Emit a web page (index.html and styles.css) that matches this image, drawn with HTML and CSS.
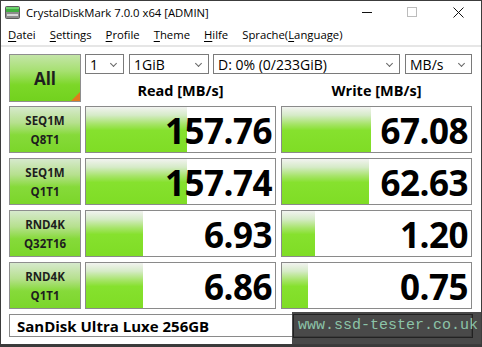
FILE: index.html
```html
<!DOCTYPE html>
<html>
<head>
<meta charset="utf-8">
<link rel="stylesheet" href="styles.css">
</head>
<body>
<div class="window">
  <div class="titlebar">
    <svg class="appicon" width="15" height="13" viewBox="0 0 15 13">
      <rect x="0.5" y="0.5" width="14" height="12" rx="1" fill="#8c8c8c" stroke="#5a5a5a"/>
      <rect x="1" y="1" width="13" height="5" fill="#3fae3f"/>
      <rect x="1" y="1" width="13" height="2" fill="#6fd36f"/>
      <rect x="2" y="8" width="11" height="2" fill="#d8d8d8"/>
    </svg>
    <span class="title">CrystalDiskMark 7.0.0 x64 [ADMIN]</span>
    <div class="controls">
      <span class="ctl min"></span>
      <span class="ctl max"></span>
      <svg class="ctl close" width="11" height="11" viewBox="0 0 11 11"><path d="M0.5 0.5 L10.5 10.5 M10.5 0.5 L0.5 10.5" stroke="#111" stroke-width="1"/></svg>
    </div>
  </div>
  <div class="menubar">
    <span class="mi"><u>D</u>atei</span>
    <span class="mi"><u>S</u>ettings</span>
    <span class="mi"><u>P</u>rofile</span>
    <span class="mi"><u>T</u>heme</span>
    <span class="mi"><u>H</u>ilfe</span>
    <span class="mi">Sprache(<u>L</u>anguage)</span>
  </div>
  <div class="content">
    <div class="btn allbtn">All<span class="corner"></span></div>
    <div class="topright">
      <div class="combos">
        <div class="combo c1"><span>1</span><i class="chev"></i></div>
        <div class="combo c2"><span>1GiB</span><i class="chev"></i></div>
        <div class="combo c3"><span>D: 0% (0/233GiB)</span><i class="chev"></i></div>
        <div class="combo c4"><span>MB/s</span><i class="chev"></i></div>
      </div>
      <div class="heads">
        <div class="head">Read [MB/s]</div>
        <div class="head">Write [MB/s]</div>
      </div>
    </div>

    <div class="btn"><span>SEQ1M</span><span>Q8T1</span></div>
    <div class="cell"><div class="bar" style="width:101px"></div><span class="val">157.76</span></div>
    <div class="cell w"><div class="bar" style="width:89px"></div><span class="val">67.08</span></div>

    <div class="btn"><span>SEQ1M</span><span>Q1T1</span></div>
    <div class="cell"><div class="bar" style="width:101px"></div><span class="val">157.74</span></div>
    <div class="cell w"><div class="bar" style="width:87px"></div><span class="val">62.63</span></div>

    <div class="btn"><span>RND4K</span><span>Q32T16</span></div>
    <div class="cell"><div class="bar" style="width:57px"></div><span class="val">6.93</span></div>
    <div class="cell w"><div class="bar" style="width:33px"></div><span class="val">1.20</span></div>

    <div class="btn"><span>RND4K</span><span>Q1T1</span></div>
    <div class="cell"><div class="bar" style="width:57px"></div><span class="val">6.86</span></div>
    <div class="cell w"><div class="bar" style="width:26px"></div><span class="val">0.75</span></div>

    <div class="name">SanDisk Ultra Luxe 256GB</div>
  </div>
  <div class="watermark"><span>www.ssd-tester.co.uk</span></div>
</div>
</body>
</html>
```
FILE: styles.css
```css
* { box-sizing: border-box; }
html, body { margin: 0; padding: 0; }
body {
  width: 482px;
  height: 347px;
  background: #3a3a3a;
  font-family: "Open Sans", "Noto Sans", sans-serif;
  color: #000;
  overflow: hidden;
}
.window {
  position: relative;
  width: 482px;
  height: 345px;
  background: #fff;
  border: 1px solid #3c3c3c;
  overflow: hidden;
}
.titlebar {
  height: 22px;
  display: flex;
  align-items: center;
  padding-left: 4px;
}
.title {
  margin-left: 6px;
  font-size: 11.3px;
  color: #000;
}
.controls {
  margin-left: auto;
  display: flex;
  align-items: center;
  height: 22px;
}
.ctl { display: block; }
.min {
  width: 10px;
  height: 1px;
  background: #111;
  margin-right: 35px;
}
.max {
  width: 10px;
  height: 10px;
  border: 1px solid #bcbcbc;
  margin-right: 36px;
}
.close { margin-right: 17px; }
.menubar {
  display: flex;
  align-items: center;
  padding-left: 7px;
  font-size: 11.3px;
  border-bottom: 2px solid #e6e6e6;
  height: 24px;
}
.mi { margin-right: 14px; }
.mi u { text-underline-offset: 2px; }
.content {
  display: grid;
  grid-template-columns: 72px 191px 192px;
  grid-template-rows: 48px 48px 48px 48px 48px 23px;
  column-gap: 4px;
  row-gap: 4px;
  padding: 7px 0 0 8px;
}
.btn {
  border: 1px solid #8e8e8e;
  background: linear-gradient(to bottom, #d6e9cc 0%, #b6e08e 35%, #86da3a 62%, #7bd62a 100%);
  display: flex;
  flex-direction: column;
  align-items: center;
  justify-content: center;
  font-weight: 700;
  font-size: 11.5px;
  line-height: 19px;
  color: #1e1e1e;
  height: 47px;
}
.allbtn {
  position: relative;
  font-size: 17px;
  height: 48px;
  background: linear-gradient(to bottom, #c4e5a8 0%, #a6e070 35%, #7cd728 65%, #72d21e 100%);
}
.corner {
  position: absolute;
  right: 0;
  bottom: 0;
  width: 0;
  height: 0;
  border-left: 9px solid transparent;
  border-bottom: 9px solid #e07a1e;
}
.topright {
  grid-column: 2 / 4;
  display: flex;
  flex-direction: column;
}
.combos {
  display: flex;
  height: 20px;
}
.combo {
  height: 20px;
  border: 1px solid #7a7a7a;
  background: #fff;
  display: flex;
  align-items: center;
  padding-left: 4px;
  font-size: 14px;
  position: relative;
}
.c1 { width: 39px; margin-right: 5px; }
.c2 { width: 80px; margin-right: 4px; }
.c3 { width: 187px; margin-right: 5px; }
.c4 { width: 67px; }
.chev {
  position: absolute;
  right: 7px;
  top: 6px;
  width: 5px;
  height: 5px;
  border-right: 1px solid #666;
  border-bottom: 1px solid #666;
  transform: rotate(45deg);
}
.heads {
  display: flex;
  flex: 1;
  align-items: center;
}
.head {
  width: 191px;
  text-align: center;
  font-weight: 700;
  font-size: 14.5px;
  padding-top: 5px;
}
.head + .head { margin-left: 5px; }
.cell {
  position: relative;
  border: 1px solid #8a8a8a;
  background: #fff;
  display: flex;
  align-items: center;
  justify-content: flex-end;
  height: 47px;
}
.cell.w { margin-left: 1px; }
.bar {
  position: absolute;
  left: 0;
  top: 0;
  bottom: 0;
  background: linear-gradient(to bottom, #f2f3f0 0%, #d6ebc8 18%, #a6e468 38%, #86e12e 52%, #7fdd25 100%);
}
.val {
  position: relative;
  font-weight: 700;
  font-size: 35px;
  line-height: 1;
  padding-right: 3px;
  padding-top: 2px;
  letter-spacing: -0.5px;
}
.name {
  grid-column: 1 / 4;
  border: 1px solid #8a8a8a;
  font-weight: 700;
  font-size: 15px;
  display: flex;
  align-items: center;
  padding-left: 7px;
  height: 23px;
}
.watermark {
  position: absolute;
  left: 291px;
  top: 311px;
  width: 200px;
  height: 40px;
  background: rgba(48, 48, 48, 0.88);
  padding: 2px 0 0 1px;
}
.watermark span {
  display: block;
  width: 180px;
  height: 24px;
  border: 1px solid #222;
  font-family: "Liberation Mono", "DejaVu Sans Mono", monospace;
  font-size: 15px;
  line-height: 22px;
  color: #8cc4a8;
  padding-left: 4px;
  white-space: nowrap;
}
```
